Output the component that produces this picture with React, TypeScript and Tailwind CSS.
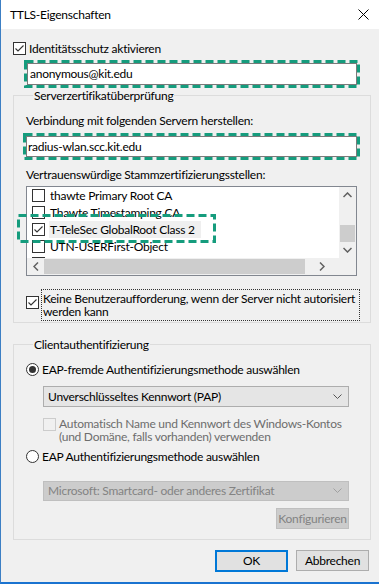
import React from 'react';

const font = { fontFamily: 'Lato, Roboto, "Noto Sans", sans-serif', letterSpacing: '-0.25px' };

function CheckBox({ checked, disabled }: { checked?: boolean; disabled?: boolean }) {
    return (
        <span
            className={`w-[13px] h-[13px] shrink-0 border flex items-center justify-center ${
                disabled ? 'border-[#cccccc] bg-[#f0f0f0]' : 'border-[#333333] bg-white'
            }`}
        >
            {checked && (
                <svg width="11" height="11" viewBox="0 0 11 11">
                    <path d="M1.5 5.5 L4 8 L9.5 2.5" fill="none" stroke="#333" strokeWidth="1.1" />
                </svg>
            )}
        </span>
    );
}

function Radio({ checked }: { checked?: boolean }) {
    return (
        <span className="w-[13px] h-[13px] shrink-0 rounded-full border border-[#333333] bg-white flex items-center justify-center">
            {checked && <span className="w-[7px] h-[7px] rounded-full bg-[#333333]" />}
        </span>
    );
}

function Dashed({ className }: { className: string }) {
    return (
        <svg className={`absolute pointer-events-none ${className}`} width="100%" height="100%">
            <rect x="1.5" y="1.5" width="calc(100% - 3px)" height="calc(100% - 3px)" fill="none" stroke="#159c7d" strokeWidth="3" strokeDasharray="8 4" />
        </svg>
    );
}

function Chevron({ color }: { color: string }) {
    return (
        <svg width="9" height="6" viewBox="0 0 9 6">
            <path d="M0.5 0.5 L4.5 4.5 L8.5 0.5" fill="none" stroke={color} strokeWidth="1" />
        </svg>
    );
}

const certs = [
    'thawte Primary Root CA',
    'Thawte Timestamping CA',
    'T-TeleSec GlobalRoot Class 2',
    'UTN-USERFirst-Object',
    'VeriSign Class 3 Public Primary Certification Authority - G3',
];

export default function App() {
    return (
        <div style={font} className="w-[379px] h-[584px] bg-[#f0f0f0] border-l border-l-[#3c7fc4] border-b-2 border-b-[#1a73d0] flex flex-col text-[12px] text-black overflow-hidden">
            <div className="h-[29px] shrink-0 bg-white flex items-center justify-between pl-[9px] pr-[10px]">
                <span className="text-[12px] text-black">TTLS-Eigenschaften</span>
                <svg width="11" height="11" viewBox="0 0 11 11">
                    <path d="M0.5 0.5 L10.5 10.5 M10.5 0.5 L0.5 10.5" stroke="#000" strokeWidth="1" />
                </svg>
            </div>

            <div className="pl-[12px] pr-[8px] flex flex-col shrink-0">
                <label className="flex items-center gap-[3px] mt-[13px] h-[13px]">
                    <CheckBox checked />
                    <span>Identitätsschutz aktivieren</span>
                </label>

                <div className="relative ml-[14px] mr-[14px] mt-[8px]">
                    <div className="h-[22px] bg-white border border-[#7a7a7a] flex items-center px-[2px]">anonymous@kit.edu</div>
                    <Dashed className="-left-[3px] -top-[3px] w-[calc(100%+6px)] h-[28px]" />
                </div>

                <fieldset className="min-w-0 border border-[#dcdcdc] mt-[3px] pl-[12px] pr-[13px] pb-[1px]">
                    <legend className="ml-[7px] px-[1px] leading-[15px]">Serverzertifikatüberprüfung</legend>
                    <div className="mt-[10px] leading-[15px]">Verbindung mit folgenden Servern herstellen:</div>
                    <div className="relative mt-[8px]">
                        <div className="h-[21px] bg-white border border-[#7a7a7a] flex items-center px-[1px]">radius-wlan.scc.kit.edu</div>
                        <Dashed className="-left-[3px] -top-[3px] w-[calc(100%+6px)] h-[27px]" />
                    </div>
                    <div className="mt-[10px] leading-[15px]">Vertrauenswürdige Stammzertifizierungsstellen:</div>

                    <div className="relative mt-[4px] h-[90px] border border-[#828790] bg-white flex flex-col">
                        <div className="flex flex-1 min-h-0">
                            <div className="flex-1 min-w-0 overflow-hidden flex flex-col">
                                {certs.map((c, i) => (
                                    <div key={c} className="h-[17px] shrink-0 flex items-center pl-[5px]">
                                        <CheckBox checked={i === 2} />
                                        <span className={`ml-[4px] px-[1px] whitespace-nowrap leading-[17px] ${i === 2 ? 'bg-[#efefef] pr-[6px]' : ''}`}>{c}</span>
                                    </div>
                                ))}
                            </div>
                            <div className="w-[17px] shrink-0 bg-[#f0f0f0] flex flex-col items-center">
                                <div className="h-[17px] flex items-center justify-center">
                                    <svg width="9" height="6" viewBox="0 0 9 6"><path d="M0.5 5 L4.5 1 L8.5 5" fill="none" stroke="#606060" strokeWidth="1.5" /></svg>
                                </div>
                                <div className="h-[23px]" />
                                <div className="w-[15px] h-[17px] bg-[#cdcdcd]" />
                                <div className="flex-1" />
                                <div className="h-[17px] flex items-center justify-center">
                                    <svg width="9" height="6" viewBox="0 0 9 6"><path d="M0.5 1 L4.5 5 L8.5 1" fill="none" stroke="#606060" strokeWidth="1.5" /></svg>
                                </div>
                            </div>
                        </div>
                        <div className="h-[17px] shrink-0 bg-[#f0f0f0] flex items-center">
                            <div className="w-[17px] flex items-center justify-center">
                                <svg width="6" height="9" viewBox="0 0 6 9"><path d="M5 0.5 L1 4.5 L5 8.5" fill="none" stroke="#606060" strokeWidth="1.5" /></svg>
                            </div>
                            <div className="w-[261px] h-[15px] bg-[#cdcdcd]" />
                            <div className="flex-1 flex items-center justify-center pr-[17px]">
                                <svg width="6" height="9" viewBox="0 0 6 9"><path d="M1 0.5 L5 4.5 L1 8.5" fill="none" stroke="#606060" strokeWidth="1.5" /></svg>
                            </div>
                        </div>
                        <Dashed className="-left-[10px] top-[27px] w-[199px] h-[29px]" />
                    </div>

                    <label className="flex items-start gap-[2px] mt-[19px]">
                        <span className="mt-[1px]"><CheckBox checked /></span>
                        <span className="leading-[13px] whitespace-nowrap border border-dotted border-[#333] pl-[1px] pr-[4px] -mt-[6px] py-[2px]">
                            Keine Benutzeraufforderung, wenn der Server nicht autorisiert
                            <br />
                            werden kann
                        </span>
                    </label>
                </fieldset>

                <fieldset className="min-w-0 border border-[#dcdcdc] mt-[14px] pl-[12px] pr-[21px] pb-[10px]">
                    <legend className="ml-[7px] px-[1px] leading-[15px]">Clientauthentifizierung</legend>
                    <label className="flex items-center gap-[3px] mt-[10px] h-[15px]">
                        <Radio checked />
                        <span>EAP-fremde Authentifizierungsmethode auswählen</span>
                    </label>
                    <div className="ml-[17px] mt-[9px] h-[21px] bg-[#e5e5e5] border border-[#adadad] flex items-center justify-between pl-[4px] pr-[6px]">
                        <span>Unverschlüsseltes Kennwort (PAP)</span>
                        <Chevron color="#555" />
                    </div>
                    <label className="flex items-start gap-[3px] ml-[17px] mt-[11px] text-[#6d6d6d]">
                        <CheckBox disabled />
                        <span className="leading-[13px] -mt-[1px] whitespace-nowrap">
                            Automatisch Name und Kennwort des Windows-Kontos
                            <br />
                            (und Domäne, falls vorhanden) verwenden
                        </span>
                    </label>
                    <label className="flex items-center gap-[3px] mt-[6px] h-[15px]">
                        <Radio />
                        <span>EAP Authentifizierungsmethode auswählen</span>
                    </label>
                    <div className="ml-[17px] mt-[17px] h-[20px] bg-[#cccccc] border border-[#bfbfbf] flex items-center justify-between pl-[4px] pr-[6px] text-[#838383]">
                        <span>Microsoft: Smartcard- oder anderes Zertifikat</span>
                        <Chevron color="#a0a0a0" />
                    </div>
                    <div className="flex justify-end mt-[7px]">
                        <div className="w-[73px] h-[21px] bg-[#cccccc] border border-[#bfbfbf] flex items-center justify-center text-[#838383]">Konfigurieren</div>
                    </div>
                </fieldset>

                <div className="flex justify-end gap-[8px] mt-[10px] pr-[2px]">
                    <div className="w-[73px] h-[22px] bg-[#e1e1e1] border-2 border-[#0078d7] flex items-center justify-center">OK</div>
                    <div className="w-[73px] h-[21px] bg-[#e1e1e1] border border-[#adadad] flex items-center justify-center">Abbrechen</div>
                </div>
            </div>
        </div>
    );
}
